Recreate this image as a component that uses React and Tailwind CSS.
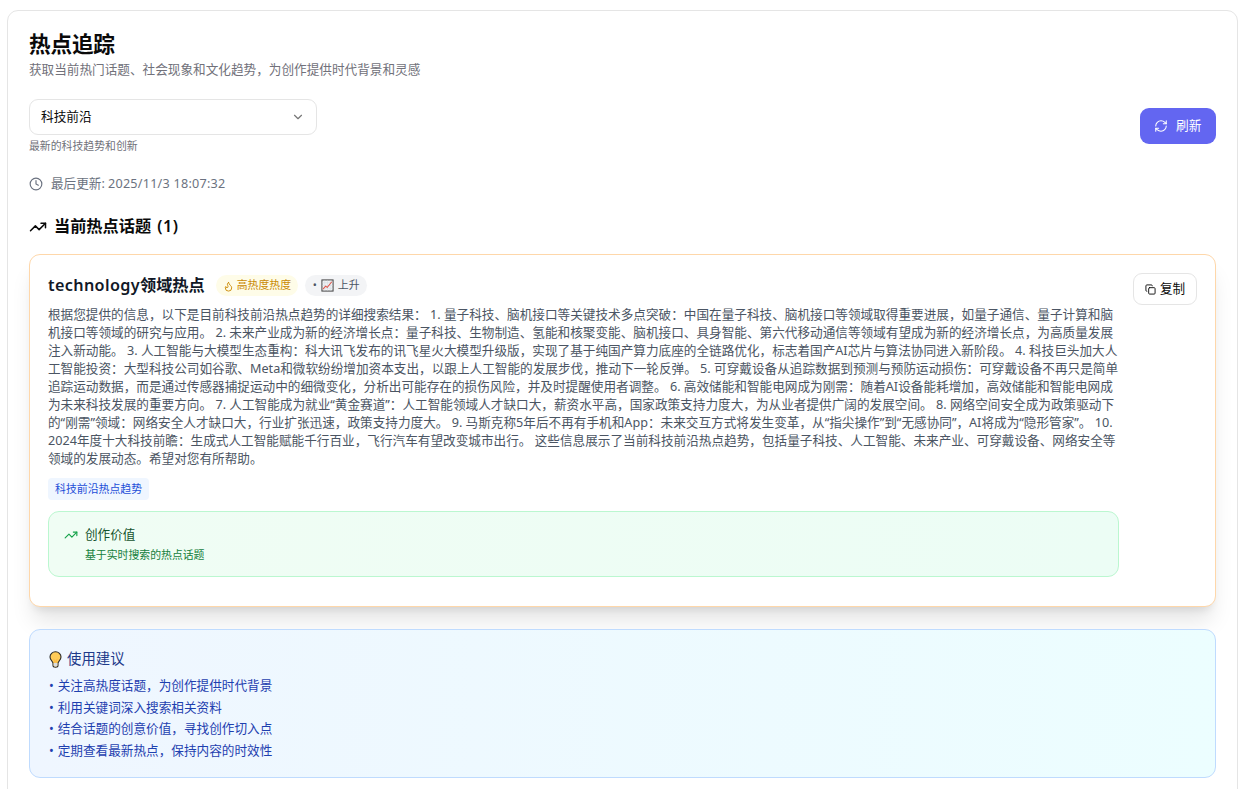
import { ChevronDown, Clock, Copy, Flame, RefreshCw, TrendingUp } from "lucide-react";

const topicLines = [
  "根据您提供的信息，以下是目前科技前沿热点趋势的详细搜索结果： 1. 量子科技、脑机接口等关键技术多点突破：中国在量子科技、脑机接口等领域取得重要进展，如量子通信、量子计算和脑",
  "机接口等领域的研究与应用。 2. 未来产业成为新的经济增长点：量子科技、生物制造、氢能和核聚变能、脑机接口、具身智能、第六代移动通信等领域有望成为新的经济增长点，为高质量发展",
  "注入新动能。 3. 人工智能与大模型生态重构：科大讯飞发布的讯飞星火大模型升级版，实现了基于纯国产算力底座的全链路优化，标志着国产AI芯片与算法协同进入新阶段。 4. 科技巨头加大人",
  "工智能投资：大型科技公司如谷歌、Meta和微软纷纷增加资本支出，以跟上人工智能的发展步伐，推动下一轮反弹。 5. 可穿戴设备从追踪数据到预测与预防运动损伤：可穿戴设备不再只是简单",
  "追踪运动数据，而是通过传感器捕捉运动中的细微变化，分析出可能存在的损伤风险，并及时提醒使用者调整。 6. 高效储能和智能电网成为刚需：随着AI设备能耗增加，高效储能和智能电网成",
  "为未来科技发展的重要方向。 7. 人工智能成为就业“黄金赛道”：人工智能领域人才缺口大，薪资水平高，国家政策支持力度大，为从业者提供广阔的发展空间。 8. 网络空间安全成为政策驱动下",
  "的“刚需”领域：网络安全人才缺口大，行业扩张迅速，政策支持力度大。 9. 马斯克称5年后不再有手机和App：未来交互方式将发生变革，从“指尖操作”到“无感协同”，AI将成为“隐形管家”。 10.",
  "2024年度十大科技前瞻：生成式人工智能赋能千行百业，飞行汽车有望改变城市出行。 这些信息展示了当前科技前沿热点趋势，包括量子科技、人工智能、未来产业、可穿戴设备、网络安全等",
  "领域的发展动态。希望对您有所帮助。",
];

const tips = [
  "关注高热度话题，为创作提供时代背景",
  "利用关键词深入搜索相关资料",
  "结合话题的创意价值，寻找创作切入点",
  "定期查看最新热点，保持内容的时效性",
];

const ChartIcon = ({ className }) => (
  <svg viewBox="0 0 14 14" className={className} fill="none">
    <rect x="1" y="1" width="12" height="12" fill="#f0f2f4" stroke="#454545" strokeWidth="1.1" />
    <path d="M4 1.5v11M7 1.5v11M10 1.5v11M1.5 4h11M1.5 7h11M1.5 10h11" stroke="#d3dbe2" strokeWidth="0.6" />
    <path d="M2 11l3-3.2 1.8 1.2L11.6 3" stroke="#e0554a" strokeWidth="1.1" />
  </svg>
);

const BulbIcon = ({ className }) => (
  <svg viewBox="0 0 13 17" className={className}>
    <path
      d="M6.5.8C3.3.8 1 3.1 1 6c0 2 .9 3 1.9 4.1.7.8 1 1.4 1.1 2.3v2.1c0 1 .8 1.7 2.5 1.7S9 15.5 9 14.5v-2.1c.1-.9.4-1.5 1.1-2.3C11.1 9 12 8 12 6 12 3.1 9.7.8 6.5.8z"
      fill="#ffcb57"
      stroke="#2b2b2b"
      strokeWidth="1.1"
    />
    <path d="M4.6 12h3.8v2.5c0 .7-.7 1.1-1.9 1.1s-1.9-.4-1.9-1.1z" fill="#d9dde1" />
    <path d="M4.5 8.2l1.3 1v2.5M8.5 8.2l-1.3 1v2.5" stroke="#f8b03c" strokeWidth="0.8" fill="none" />
  </svg>
);

const Header = () => (
  <div>
    <h1 className="-mt-px text-[21.6px] leading-[25px] font-bold tracking-[-0.15px] text-[#0a0a0a]">热点追踪</h1>
    <p className="mt-1 text-[12.64px] leading-[18px] text-[#71717a]">
      获取当前热门话题、社会现象和文化趋势，为创作提供时代背景和灵感
    </p>
  </div>
);

const Toolbar = () => (
  <div className="mt-[21px] flex items-center justify-between">
    <div>
      <button className="flex h-9 w-[288px] items-center justify-between rounded-[9px] border border-[#e5e5e5] px-[11px] text-[12.7px] text-[#0a0a0a]">
        <span>科技前沿</span>
        <ChevronDown className="size-[14px] text-[#777]" strokeWidth={2} />
      </button>
      <p className="mt-1 text-[10.86px] leading-[14px] text-[#71717a]">最新的科技趋势和创新</p>
    </div>
    <button className="flex h-9 w-[76px] items-center rounded-[9px] bg-[#6366f1] pl-[14px] text-[12.7px] text-white">
      <RefreshCw className="mr-[8px] size-[14px]" strokeWidth={1.8} />
      刷新
    </button>
  </div>
);

const TopicCard = () => (
  <div className="flex items-start justify-between rounded-[11px] border border-[#fed7aa] bg-white p-[18px] pb-[29px] shadow-[0_18px_22.5px_-4.5px_rgba(0,0,0,0.1),0_7.2px_9px_-5.4px_rgba(0,0,0,0.1)]">
    <div className="w-[1071px]">
      <div className="flex h-[25px] items-center">
        <h3 className="text-[16.2px] font-semibold text-[#111827]">
          <span className="tracking-[0.36px]">technology</span>领域热点
        </h3>
        <span className="ml-[11px] flex h-[21px] w-[82px] items-center rounded-full bg-[#fefce8] pl-[7px] text-[10.86px] text-[#ca8a04]">
          <Flame className="mt-[2px] mr-[3px] size-[11px]" />
          高热度热度
        </span>
        <span className="ml-[7px] flex h-[21px] w-[62px] items-center rounded-full bg-[#f3f4f6] pl-[8px] text-[10.86px] text-[#4b5563]">
          •
          <ChartIcon className="mr-[4px] ml-[4px] size-[13px]" />
          上升
        </span>
      </div>
      <p className="mt-[7px] text-[12.64px] leading-[18px] text-[#4b5563]">
        {topicLines.map((line) => (
          <span key={line} className="block whitespace-nowrap">{line}</span>
        ))}
      </p>
      <div className="mt-[11px] flex">
        <span className="flex h-[22px] items-center rounded-[4px] bg-[#eff6ff] px-[7px] text-[10.9px] text-[#1d4ed8]">
          科技前沿热点趋势
        </span>
      </div>
      <div className="mt-[11px] flex h-[66px] rounded-[11px] border border-[#bbf7d0] bg-linear-to-r from-[#f0fdf4] to-[#ecfdf5] pt-[14px] pl-[15px]">
        <TrendingUp className="mt-[2px] mr-[7px] size-[14px] text-[#16a34a]" />
        <div>
          <p className="text-[12.6px] leading-[18px] text-[#14532d]">创作价值</p>
          <p className="mt-[3px] text-[10.86px] leading-[15px] text-[#15803d]">基于实时搜索的热点话题</p>
        </div>
      </div>
    </div>
    <button className="flex h-8 w-16 items-center rounded-[9px] border border-[#e5e5e5] pl-[11px] text-[12.6px] text-[#0a0a0a]">
      <Copy className="mr-[4px] size-[11px]" strokeWidth={2} />
      复制
    </button>
  </div>
);

const TipsCard = () => (
  <div className="relative mt-[22px] h-[149px] rounded-[11px] border border-[#bfdbfe] bg-linear-to-r from-[#eff6ff] to-[#ecfeff] pt-[18px] pl-[19px]">
    <h3 className="flex h-[22px] items-center text-[14.4px] text-[#1e3a8a]">
      <BulbIcon className="mr-[5px] h-[17px] w-[13px]" />
      使用建议
    </h3>
    <ul className="mt-[5px] text-[12.64px] leading-[21.7px] text-[#1e40af]">
      {tips.map((tip) => (
        <li key={tip}>
          <span className="mr-[0.6px]">•</span> {tip}
        </li>
      ))}
    </ul>
  </div>
);

export default function App() {
  return (
    <div className="h-screen overflow-hidden bg-white pt-[10px] pr-[11px] pl-[7px] font-['Noto_Sans','Noto_Sans_CJK_SC',sans-serif]">
      <div className="h-[840px] rounded-[11px] border border-[#e5e5e5] px-[21px] pt-[21px]">
        <Header />
        <Toolbar />
        <div className="mt-[22px] flex h-[18px] items-center text-[12.6px] text-[#6b7280]">
          <Clock className="mr-[8px] size-[14px]" />
          <span>
            最后更新: <span className="tracking-[0.24px]">2025/11/3 18:07:32</span>
          </span>
        </div>
        <h2 className="mt-[21px] mb-[15px] flex h-[25px] items-center text-[16.2px] font-semibold text-[#0a0a0a]">
          <TrendingUp className="mr-[7px] size-[18px]" />
          <span>
            当前热点话题<span className="ml-[1.5px] tracking-[0.5px]"> (1)</span>
          </span>
        </h2>
        <TopicCard />
        <TipsCard />
      </div>
    </div>
  );
}
